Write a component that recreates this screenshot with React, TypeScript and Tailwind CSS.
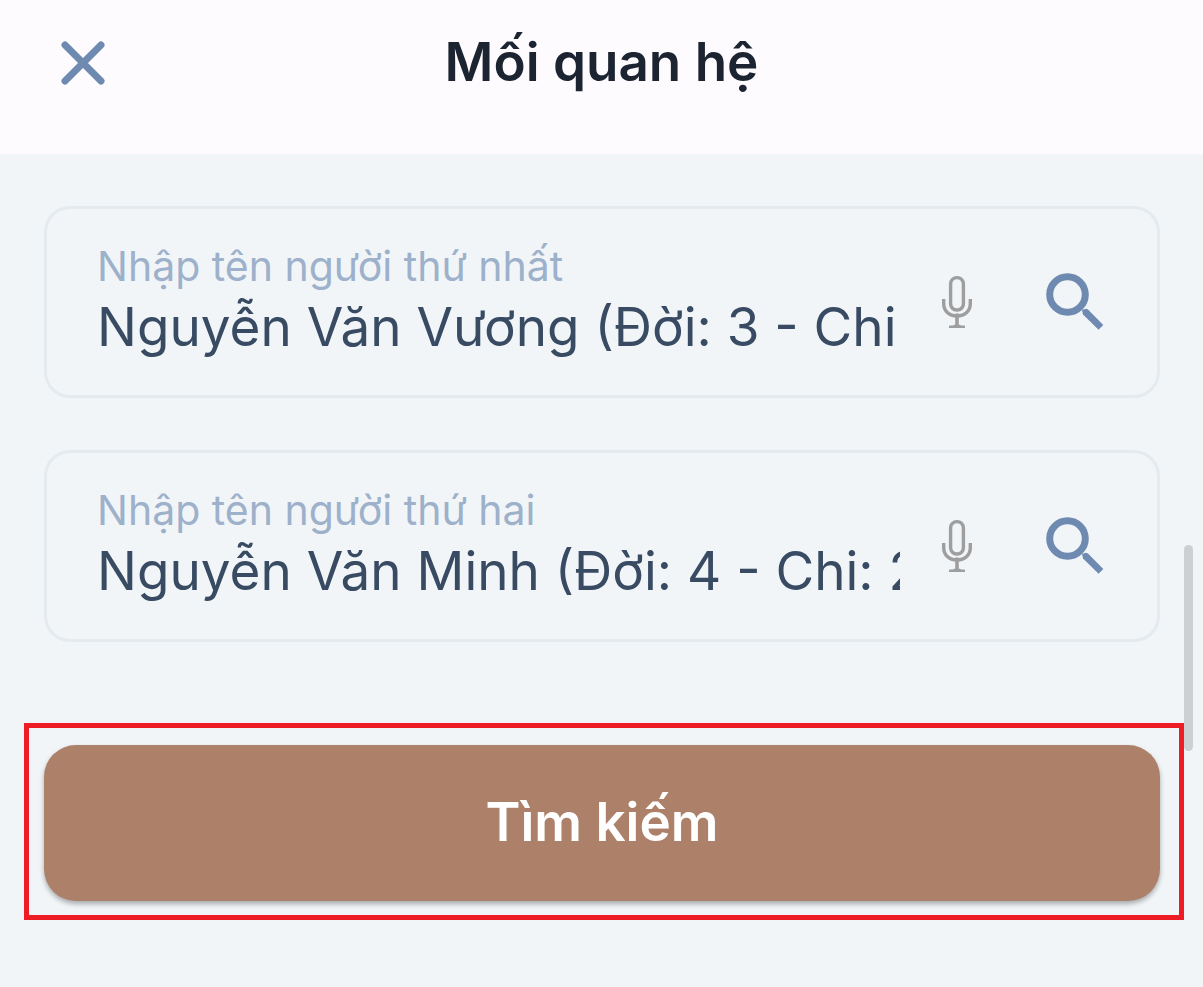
import { useState } from "react";

function CloseIcon() {
  return (
    <svg viewBox="0 0 44 44" className="size-11" fill="none" aria-hidden="true">
      <path d="M4 4 40 40M40 4 4 40" stroke="#6f8ab0" strokeWidth="7" strokeLinecap="round" />
    </svg>
  );
}

function MicIcon() {
  return (
    <svg viewBox="0 0 30 54" className="h-[54px] w-[30px]" fill="none" aria-hidden="true">
      <rect x="8.6" y="2.6" width="12.8" height="32.4" rx="6.2" stroke="#9e9e9e" strokeWidth="3.4" />
      <path d="M1.7 24V28.5C1.7 36 7 41 15 41S28.3 36 28.3 28.5V24" stroke="#9e9e9e" strokeWidth="3.4" />
      <path d="M13.2 38.5H16.8V49.5C18 50.6 21 50.4 23 50.8V53H7V50.8C9 50.4 12 50.6 13.2 49.5Z" fill="#9e9e9e" />
    </svg>
  );
}

function SearchIcon() {
  return (
    <svg viewBox="0 0 58 58" className="size-[58px]" fill="none" aria-hidden="true">
      <circle cx="21.5" cy="21.5" r="17.8" stroke="#6f8ab0" strokeWidth="7" />
      <path d="M36 37 40 35.8 42 36.6 57.3 52 52.6 56.8 37 41.4Z" fill="#6f8ab0" />
    </svg>
  );
}

type PersonFieldProps = { id: string; label: string; initial: string };

function PersonField({ id, label, initial }: PersonFieldProps) {
  const [value, setValue] = useState(initial);
  return (
    <div className="flex h-48 items-center rounded-[26px] border-3 border-[#e5eaee] pr-[53px] pl-[50px]">
      <div className="flex min-w-0 flex-1 flex-col">
        <label htmlFor={id} className="text-[41px] leading-[52px] text-[#9db1cb]">
          {label}
        </label>
        <input
          id={id}
          type="text"
          value={value}
          onChange={(event) => setValue(event.target.value)}
          className="h-[72px] w-full bg-transparent text-[53px] text-[#384b63] outline-none"
        />
      </div>
      <button type="button" aria-label="Nhập bằng giọng nói" className="ml-[42px] shrink-0">
        <MicIcon />
      </button>
      <button type="button" aria-label="Tìm người" className="ml-[74px] shrink-0">
        <SearchIcon />
      </button>
    </div>
  );
}

export default function App() {
  return (
    <div className="relative flex min-h-screen flex-col bg-[#f1f5f8] font-[Inter,'Noto_Sans',sans-serif] [font-optical-sizing:none]">
      <header className="grid h-[154px] grid-cols-[1fr_auto_1fr] items-center bg-[#fefbff] px-[61px] pb-7">
        <button type="button" aria-label="Đóng" className="justify-self-start">
          <CloseIcon />
        </button>
        <h1 className="text-[53px] font-semibold text-[#1b2430]">Mối quan hệ</h1>
      </header>
      <main className="pt-[52px] pr-[43px] pl-11">
        <form className="flex flex-col" onSubmit={(event) => event.preventDefault()}>
          <div className="flex flex-col gap-[52px]">
            <PersonField id="first-person" label="Nhập tên người thứ nhất" initial="Nguyễn Văn Vương (Đời: 3 - Chi: 2)" />
            <PersonField id="second-person" label="Nhập tên người thứ hai" initial="Nguyễn Văn Minh (Đời: 4 - Chi: 2)" />
          </div>
          <div className="-mr-6 -ml-5 mt-[81px] border-5 border-[#ee1c25] pt-[17px] pr-[19px] pb-[14px] pl-[15px]">
            <button
              type="submit"
              className="h-[156px] w-full rounded-[32px] bg-[#ad8169] text-[53px] font-semibold text-white shadow-[0_3px_5px_rgba(0,0,0,0.3)]"
            >
              Tìm kiếm
            </button>
          </div>
        </form>
      </main>
      <div className="absolute top-[545px] right-[10px] h-[206px] w-[9px] rounded-full bg-[#cdcfd1]" />
    </div>
  );
}
